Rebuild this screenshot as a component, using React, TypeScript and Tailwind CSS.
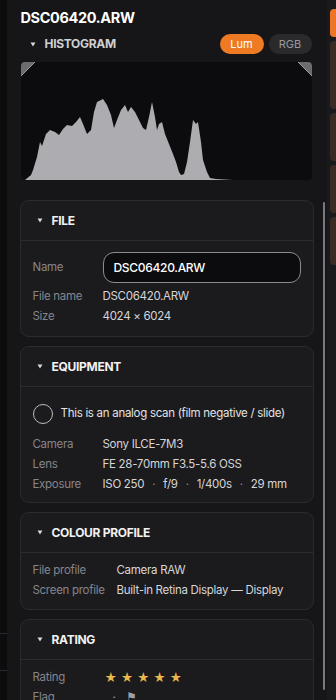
import { ReactNode } from 'react';

const font = { fontFamily: 'Inter, "Noto Sans", sans-serif' };

const histogram =
  'M4,118 L10,113 L12,108 L16,95 L19,80 L21,84 L25,72 L29,68 L34,70 L38,73 L42,67 L46,63 L51,64 L55,60 L59,55 L62,62 L66,72 L70,68 L73,50 L76,40 L82,37 L86,43 L90,53 L93,66 L96,58 L100,48 L104,43 L107,50 L110,45 L114,50 L118,58 L122,66 L125,68 L128,55 L131,40 L134,55 L136,68 L138,62 L141,60 L144,72 L148,82 L152,92 L155,100 L158,110 L160,113 L163,112 L166,100 L169,80 L172,58 L175,62 L177,60 L180,80 L182,98 L186,110 L189,116 L195,117 L212,118 Z';

function Caret() {
  return (
    <svg width="6" height="5" viewBox="0 0 6 5" className="shrink-0">
      <polygon points="0.5,0.5 5.5,0.5 3,4.5" fill="#d8d8da" />
    </svg>
  );
}

function Card({ title, children, body = 'pt-[7px] pb-[7px]' }: { title: string; children: ReactNode; body?: string }) {
  return (
    <section className="rounded-[9px] border border-[#2b2b2e] bg-[#1b1b1e]">
      <header className="h-[40px] flex items-center gap-[9px] pl-[16px] border-b border-[#2b2b2e]">
        <Caret />
        <h2 className="text-[12px] font-bold text-[#f2f2f2] tracking-tight">{title}</h2>
      </header>
      <div className={`px-[12px] flex flex-col ${body}`}>{children}</div>
    </section>
  );
}

function Row({ label, value, labelW = 'w-[70px]' }: { label: string; value: ReactNode; labelW?: string }) {
  return (
    <div className="flex items-center h-[20px] text-[11.5px] tracking-tight">
      <span className={`${labelW} shrink-0 text-[#85858a]`}>{label}</span>
      <span className="text-[#d6d6d8] whitespace-nowrap">{value}</span>
    </div>
  );
}

function Dot() {
  return <span className="mx-[8px] text-[#8a8a8e]">·</span>;
}

export default function App() {
  return (
    <div className="w-[336px] h-[700px] overflow-hidden flex bg-[#161618]" style={font}>
      <div className="w-[7px] bg-[#0c0c0d] flex flex-col justify-end pb-[29px] gap-[36px]">
        <div className="border-t border-[#2a2a2c]" />
        <div className="border-t border-[#2a2a2c]" />
      </div>

      <main className="relative flex-1 px-[13px] pt-[7px]">
        <h1 className="pl-[1px] h-[22px] leading-[22px] text-[14.5px] font-bold text-white tracking-tight">DSC06420.ARW</h1>

        <div className="flex items-center h-[24px] mt-[3px] pl-[10px]">
          <Caret />
          <span className="ml-[9px] text-[12px] font-bold text-[#cfcfd2] tracking-tight">HISTOGRAM</span>
          <div className="ml-auto flex gap-[5px] pr-[2px]">
            <button className="w-[44px] h-[20px] rounded-full bg-[#ef7a24] text-white text-[11px]">Lum</button>
            <button className="w-[43px] h-[20px] rounded-full bg-[#2a2a2d] text-[#9a9a9e] text-[11px]">RGB</button>
          </div>
        </div>

        <div className="mt-[6px] ml-[1px] w-[291px] h-[118px] rounded-[4px] bg-[#0c0c0e] overflow-hidden">
          <svg width="291" height="118" viewBox="0 0 291 118">
            <path d={histogram} fill="#adadb1" />
            <polygon points="0,0 14,0 0,14" fill="#6c6c70" />
            <line x1="14" y1="0" x2="0" y2="14" stroke="#9a9a9e" strokeWidth="1" />
            <polygon points="277,0 291,0 291,14" fill="#6c6c70" />
            <line x1="277" y1="0" x2="291" y2="14" stroke="#9a9a9e" strokeWidth="1" />
          </svg>
        </div>

        <div className="mt-[20px] flex flex-col gap-[9px]">
          <Card title="FILE" body="pt-[11px] pb-[9px]">
            <div className="flex items-center h-[31px] mb-[4px] text-[11.5px]">
              <span className="w-[70px] text-[#85858a] tracking-tight">Name</span>
              <div className="w-[198px] h-[31px] rounded-[11px] border border-[#8c8c90] bg-[#0c0c0e] flex items-center px-[10px] text-[12px] font-medium text-white tracking-tight">
                DSC06420.ARW
              </div>
            </div>
            <Row label="File name" value="DSC06420.ARW" />
            <Row label="Size" value="4024 × 6024" />
          </Card>

          <Card title="EQUIPMENT" body="pt-[11px] pb-[7px]">
            <div className="flex items-center gap-[8px] h-[32px] mb-[5px]">
              <span className="w-[20px] h-[20px] rounded-full border-[1.5px] border-[#bdbdc0]" />
              <span className="text-[11.5px] text-[#e2e2e4] tracking-tight whitespace-nowrap">
                This is an analog scan (film negative / slide)
              </span>
            </div>
            <Row label="Camera" value="Sony ILCE-7M3" />
            <Row label="Lens" value="FE 28-70mm F3.5-5.6 OSS" />
            <Row
              label="Exposure"
              value={
                <>
                  ISO 250<Dot />f/9<Dot />1/400s<Dot />29 mm
                </>
              }
            />
          </Card>

          <Card title="COLOUR PROFILE" body="pt-[8px] pb-[8px]">
            <Row label="File profile" value="Camera RAW" labelW="w-[84px]" />
            <Row label="Screen profile" value="Built-in Retina Display — Display" labelW="w-[84px]" />
          </Card>

          <Card title="RATING" body="pt-[8px] pb-[7px]">
            <div className="flex items-center h-[20px] text-[11.5px] tracking-tight">
              <span className="w-[72px] text-[#85858a]">Rating</span>
              <span className="flex gap-[4px] text-[12px] text-[#e8b84a]">
                <span>★</span>
                <span>★</span>
                <span>★</span>
                <span>★</span>
                <span>★</span>
              </span>
            </div>
            <div className="flex items-center h-[20px] text-[11.5px] tracking-tight">
              <span className="w-[80px] text-[#85858a]">Flag</span>
              <span className="text-[#a0a0a4]">·</span>
              <span className="ml-[10px] text-[#a0a0a4]">⚑</span>
            </div>
          </Card>
        </div>

        <div className="absolute right-[2px] top-[202px] w-[2px] h-[488px] rounded-full bg-[#7a7a7e]" />
      </main>

      <div className="w-[1px] bg-[#050505]" />
      <div className="w-[9px] bg-[#1a1a1c] pt-[9px] pl-[3px] flex flex-col gap-[4px]">
        <div className="h-[28px] rounded-l-[4px] bg-[#ec7526]" />
        <div className="h-[68px] rounded-l-[4px] bg-[#3a2b24]" />
        <div className="h-[48px] rounded-l-[4px] bg-[#3a2b24]" />
        <div className="h-[48px] rounded-l-[4px] bg-[#3a2b24]" />
        <div className="h-[48px] rounded-l-[4px] bg-[#3a2b24]" />
      </div>
    </div>
  );
}
